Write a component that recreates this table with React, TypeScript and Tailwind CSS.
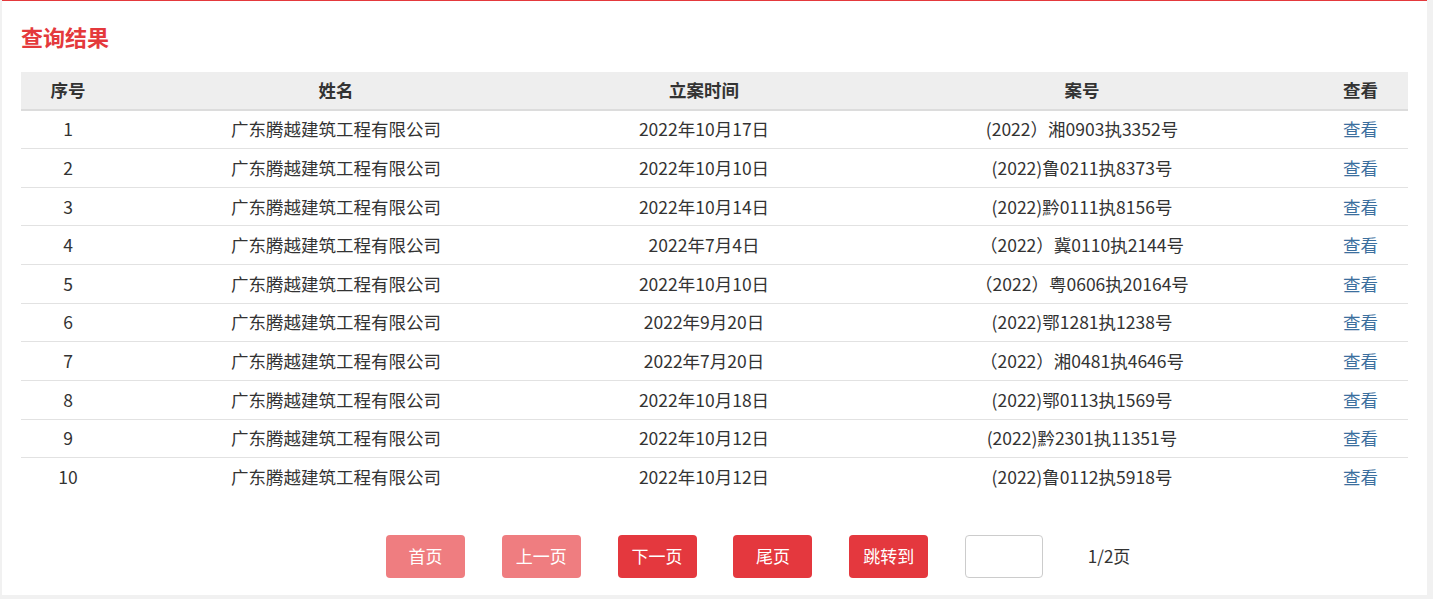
import { useState } from "react"

type Row = {
  id: number
  name: string
  date: string
  caseNo: string
}

const rows: Row[] = [
  { id: 1, name: "广东腾越建筑工程有限公司", date: "2022年10月17日", caseNo: "(2022）湘0903执3352号" },
  { id: 2, name: "广东腾越建筑工程有限公司", date: "2022年10月10日", caseNo: "(2022)鲁0211执8373号" },
  { id: 3, name: "广东腾越建筑工程有限公司", date: "2022年10月14日", caseNo: "(2022)黔0111执8156号" },
  { id: 4, name: "广东腾越建筑工程有限公司", date: "2022年7月4日", caseNo: "（2022）冀0110执2144号" },
  { id: 5, name: "广东腾越建筑工程有限公司", date: "2022年10月10日", caseNo: "（2022）粤0606执20164号" },
  { id: 6, name: "广东腾越建筑工程有限公司", date: "2022年9月20日", caseNo: "(2022)鄂1281执1238号" },
  { id: 7, name: "广东腾越建筑工程有限公司", date: "2022年7月20日", caseNo: "（2022）湘0481执4646号" },
  { id: 8, name: "广东腾越建筑工程有限公司", date: "2022年10月18日", caseNo: "(2022)鄂0113执1569号" },
  { id: 9, name: "广东腾越建筑工程有限公司", date: "2022年10月12日", caseNo: "(2022)黔2301执11351号" },
  { id: 10, name: "广东腾越建筑工程有限公司", date: "2022年10月12日", caseNo: "(2022)鲁0112执5918号" },
]

const font = { fontFamily: '"Microsoft YaHei", "Noto Sans CJK SC", "Noto Sans", sans-serif' }

export default function App() {
  const [jump, setJump] = useState("")

  return (
    <div className="min-h-[599px] bg-[#f1f1f1] pl-[2px] pr-[6px] pb-[4px]" style={font}>
      <div className="border-t border-[#e4393c] bg-white px-[19px] pt-[20px] pb-[17px]">
        {/* Title */}
        <h2 className="mb-[21px] text-[22px] leading-[30px] font-bold text-[#e4393c]">查询结果</h2>

        {/* Table */}
        <table className="w-full table-fixed border-collapse text-[17.5px] text-[#333]">
          <colgroup>
            <col className="w-[94px]" />
            <col className="w-[442px]" />
            <col className="w-[294px]" />
            <col className="w-[462px]" />
            <col className="w-[95px]" />
          </colgroup>
          <thead>
            <tr className="h-[38px] border-b-2 border-[#dcdcdc] bg-[#eeeeee]">
              <th className="text-center font-bold">序号</th>
              <th className="text-center font-bold">姓名</th>
              <th className="text-center font-bold">立案时间</th>
              <th className="text-center font-bold">案号</th>
              <th className="text-center font-bold">查看</th>
            </tr>
          </thead>
          <tbody>
            {rows.map((row, i) => (
              <tr
                key={row.id}
                className={`h-[38.67px] ${i < rows.length - 1 ? "border-b border-[#e2e2e2]" : ""}`}
              >
                <td className="text-center">{row.id}</td>
                <td className="text-center">{row.name}</td>
                <td className="text-center">{row.date}</td>
                <td className="text-center">{row.caseNo}</td>
                <td className="text-center">
                  <a href="#" className="text-[#3c6f9e]">查看</a>
                </td>
              </tr>
            ))}
          </tbody>
        </table>

        {/* Pagination */}
        <div className="mt-[38px] ml-[365px] flex items-center gap-[36.8px] text-[17px]">
          <button className="h-[43px] w-[79px] rounded-[4px] bg-[#ef7d80] text-white">首页</button>
          <button className="h-[43px] w-[79px] rounded-[4px] bg-[#ef7d80] text-white">上一页</button>
          <button className="h-[43px] w-[79px] rounded-[4px] bg-[#e4383e] text-white">下一页</button>
          <button className="h-[43px] w-[79px] rounded-[4px] bg-[#e4383e] text-white">尾页</button>
          <button className="h-[43px] w-[79px] rounded-[4px] bg-[#e4383e] text-white">跳转到</button>
          <input
            value={jump}
            onChange={(e) => setJump(e.target.value)}
            className="h-[43px] w-[78px] rounded-[4px] border border-[#cccccc] bg-white px-2 outline-none"
          />
          <span className="ml-[8px] text-[#333]">1/2页</span>
        </div>
      </div>
    </div>
  )
}
